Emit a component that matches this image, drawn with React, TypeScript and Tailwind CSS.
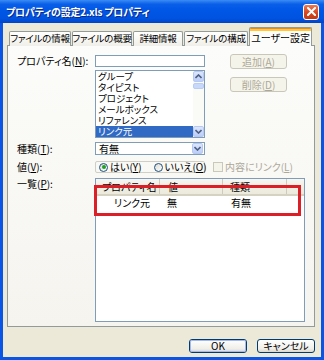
import type { ReactNode } from 'react'

const listItems = ['グループ', 'タイピスト', 'プロジェクト', 'メールボックス', 'リファレンス', 'リンク元']
const tabs = [
  { label: 'ファイルの情報', w: 'w-[62px]' },
  { label: 'ファイルの概要', w: 'w-[60px]' },
  { label: '詳細情報', w: 'w-[50px]' },
  { label: 'ファイルの構成', w: 'w-[64px]' },
]

export default function App() {
  return (
    <div className="w-[324px] h-[360px] flex flex-col bg-[#0a55e6] font-['Noto_Sans_CJK_JP','Noto_Sans',sans-serif] [font-feature-settings:'palt'] text-[10px] leading-none text-black whitespace-nowrap overflow-hidden">
      <TitleBar />
      <div className="flex-1 mx-[3px] mb-[3px] bg-[#ece9d8] flex flex-col pl-[4px] pr-[6px]">
        <TabStrip />
        <Panel />
        <div className="flex justify-end gap-[10px] pt-[12px]">
          <PushButton isDefault>OK</PushButton>
          <PushButton>キャンセル</PushButton>
        </div>
      </div>
    </div>
  )
}

function TitleBar() {
  return (
    <div className="h-[23px] flex items-center justify-between pl-[6px] pr-[5px] bg-[linear-gradient(to_bottom,#3b8cf5_0%,#0a5fe8_18%,#0056e6_45%,#0053e0_80%,#0044c8_100%)]">
      <span className="text-[10px] font-bold text-white tracking-[-0.2px] [text-shadow:1px_1px_0_#0a2a8a]">
        プロパティの設定2.xls プロパティ
      </span>
      <div className="w-[16px] h-[16px] rounded-[3px] border border-white bg-[linear-gradient(to_bottom,#ea7a55,#d9461e_55%,#c23a12)] flex items-center justify-center">
        <svg width="9" height="9" viewBox="0 0 9 9">
          <path d="M1 1 L8 8 M8 1 L1 8" stroke="white" strokeWidth="2" strokeLinecap="square" />
        </svg>
      </div>
    </div>
  )
}

function TabStrip() {
  return (
    <div className="flex items-end pt-[4px] pl-[2px] h-[23px] -mb-px relative z-10">
      {tabs.map((t) => (
        <div
          key={t.label}
          className={`${t.w} h-[15px] mr-px flex items-center justify-center border border-b-0 border-[#919b9c] rounded-t-[2px] bg-[linear-gradient(to_bottom,#ffffff,#f0efe8)] text-[9.5px] tracking-[-0.2px]`}
        >
          {t.label}
        </div>
      ))}
      <div className="w-[63px] h-[19px] flex flex-col border border-b-0 border-[#919b9c] rounded-t-[2px] bg-[#fcfcfa] overflow-hidden">
        <div className="h-[3px] bg-[#ffc83c] border-t border-[#e68b2c]" />
        <div className="flex-1 flex items-center justify-center text-[10px] pb-[1px]">ユーザー設定</div>
      </div>
    </div>
  )
}

function Panel() {
  return (
    <div className="h-[282px] border border-[#919b9c] bg-[linear-gradient(to_bottom,#fcfcfa,#f5f4ef)] pl-[9px] pt-[8px] flex flex-col">
      {/* プロパティ名 + リスト */}
      <div className="flex items-start">
        <Label className="h-[12px] mt-[1px]">
          プロパティ名(<u>N</u>):
        </Label>
        <div className="w-[110px] flex flex-col">
          <div className="h-[12px] mt-[1px] border border-[#7f9db9] bg-white" />
          <ListBox />
        </div>
        <div className="ml-[25px] flex flex-col">
          <DisabledButton>
            追加(<u>A</u>)
          </DisabledButton>
          <div className="mt-[8px]">
            <DisabledButton>
              削除(<u>D</u>)
            </DisabledButton>
          </div>
        </div>
      </div>

      {/* 種類 */}
      <div className="flex items-start mt-[4px]">
        <Label className="h-[13px]">
          種類(<u>T</u>):
        </Label>
        <div className="w-[110px] h-[13px] border border-[#7f9db9] bg-white flex items-center">
          <span className="flex-1 pl-[3px]">有無</span>
          <ScrollArrow dir="down" className="h-[11px] w-[11px] mr-px" />
        </div>
      </div>

      {/* 値 */}
      <div className="flex mt-[6px] items-center">
        <Label className="h-[12px]">
          値(<u>V</u>):
        </Label>
        <div className="w-[110px] h-[12px] border border-[#d0cfc4] rounded-[2px] flex items-center pl-[3px]">
          <Radio checked />
          <span className="ml-[2px]">
            はい(<u>Y</u>)
          </span>
          <span className="ml-[12px]">
            <Radio />
          </span>
          <span className="ml-[2px]">
            いいえ(<u>O</u>)
          </span>
        </div>
        <div className="ml-[8px] w-[10px] h-[10px] border border-[#cac8bb] bg-[#f5f4ea]" />
        <span className="ml-[2px] text-[#aca899]">
          内容にリンク(<u>L</u>)
        </span>
      </div>

      {/* 一覧 */}
      <div className="flex items-start mt-[5px]">
        <Label className="h-[12px]">
          一覧(<u>P</u>):
        </Label>
        <ListView />
      </div>
    </div>
  )
}

function Label({ children, className = '' }: { children: ReactNode; className?: string }) {
  return <div className={`w-[78px] shrink-0 flex items-center ${className}`}>{children}</div>
}

function ListBox() {
  return (
    <div className="mt-[3px] h-[68px] border border-[#7f9db9] bg-white flex">
      <div className="flex-1 flex flex-col">
        {listItems.map((item, i) => {
          const selected = i === listItems.length - 1
          return (
            <div
              key={item}
              className={`h-[11px] pl-[2px] text-[9.5px] leading-[11px] ${selected ? 'bg-[#316ac5] text-white' : ''}`}
            >
              {item}
            </div>
          )
        })}
      </div>
      <div className="w-[11px] flex flex-col bg-[#fafaf6]">
        <ScrollArrow dir="up" className="h-[11px] w-[11px]" />
        <div className="mt-[1px] h-[6px] w-[11px] rounded-[2px] border border-[#b8cdf5] bg-[#c8d8fb]" />
        <div className="flex-1" />
        <ScrollArrow dir="down" className="h-[11px] w-[11px]" />
      </div>
    </div>
  )
}

function ScrollArrow({ dir, className = '' }: { dir: 'up' | 'down'; className?: string }) {
  return (
    <div
      className={`${className} rounded-[2px] border border-[#b6c9f5] bg-[linear-gradient(to_bottom,#dce6fd,#bccdf7)] flex items-center justify-center`}
    >
      <svg width="7" height="5" viewBox="0 0 7 5">
        <path
          d={dir === 'up' ? 'M0.5 4 L3.5 1 L6.5 4' : 'M0.5 1 L3.5 4 L6.5 1'}
          fill="none"
          stroke="#4d6185"
          strokeWidth="1.6"
        />
      </svg>
    </div>
  )
}

function Radio({ checked = false }: { checked?: boolean }) {
  return (
    <div className="w-[9px] h-[9px] shrink-0 rounded-full border border-[#1c5180] bg-[linear-gradient(135deg,#dcdad0,#ffffff)] flex items-center justify-center">
      {checked && <div className="w-[4px] h-[4px] rounded-full bg-[#21a121]" />}
    </div>
  )
}

function ListView() {
  return (
    <div className="relative w-[210px] h-[144px] border border-[#7f9db9] bg-white flex flex-col">
      <div className="h-[17px] flex bg-[linear-gradient(to_bottom,#f6f5f0,#ebeadb)] border-b-2 border-[#d6d2c2]">
        <div className="w-[64px] pl-[6px] flex items-center border-r border-[#cfcbbb]">プロパティ名</div>
        <div className="w-[63px] pl-[8px] flex items-center border-r border-[#cfcbbb]">値</div>
        <div className="w-[64px] pl-[7px] flex items-center border-r border-[#cfcbbb]">種類</div>
        <div className="flex-1" />
      </div>
      <div className="h-[14px] flex items-center">
        <div className="w-[64px] pl-[18px]">リンク元</div>
        <div className="w-[64px] pl-[7px]">無</div>
        <div className="w-[65px] pl-[7px]">有無</div>
      </div>
      {/* 赤枠の注記 */}
      <div className="absolute left-[-2px] top-[6px] w-[207px] h-[31px] border-[3px] border-[#dc1f26]" />
    </div>
  )
}

function DisabledButton({ children }: { children: ReactNode }) {
  return (
    <div className="w-[57px] h-[15px] rounded-[3px] border border-[#c9c7ba] bg-[#f5f4ea] text-[#aca899] flex items-center justify-center">
      {children}
    </div>
  )
}

function PushButton({ children, isDefault = false }: { children: ReactNode; isDefault?: boolean }) {
  return (
    <div className="w-[58px] h-[14px] rounded-[3px] border border-[#003c74] bg-[linear-gradient(to_bottom,#ffffff,#f0efea_70%,#dcd8cc)] flex items-center justify-center">
      <div
        className={`w-full h-full rounded-[2px] flex items-center justify-center ${isDefault ? 'shadow-[inset_0_0_0_1px_#a5b9f0]' : ''}`}
      >
        {children}
      </div>
    </div>
  )
}
